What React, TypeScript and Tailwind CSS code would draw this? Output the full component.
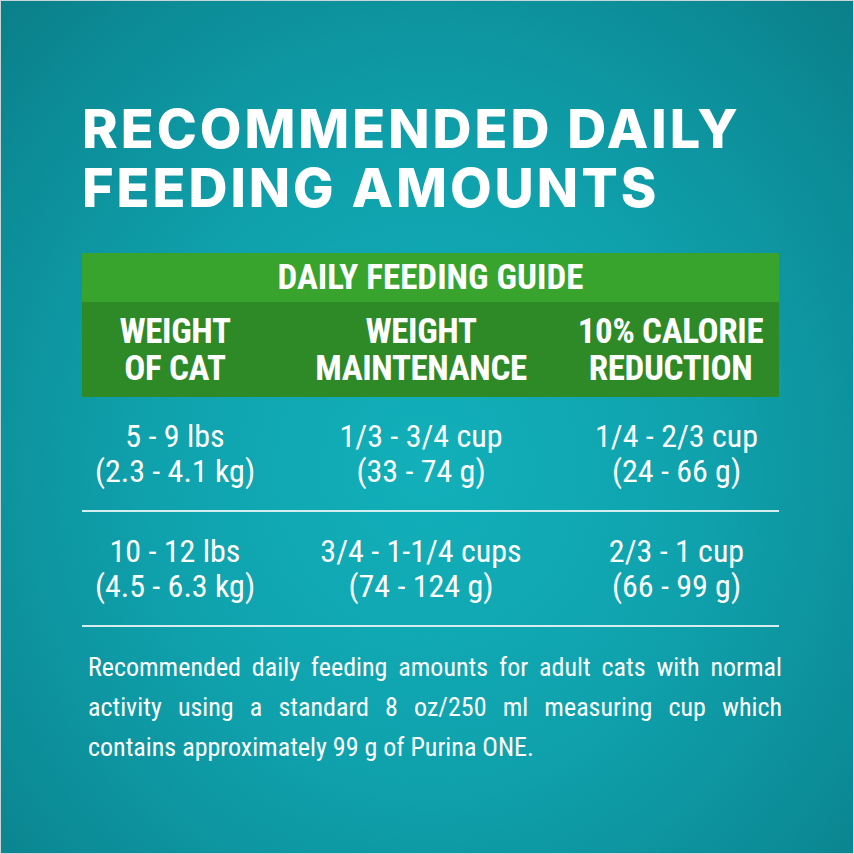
const narrow = 'font-["Roboto",sans-serif] font-stretch-[75%]';

const rows = [
  [
    ['5 - 9 lbs', '(2.3 - 4.1 kg)'],
    ['1/3 - 3/4 cup', '(33 - 74 g)'],
    ['1/4 - 2/3 cup', '(24 - 66 g)'],
  ],
  [
    ['10 - 12 lbs', '(4.5 - 6.3 kg)'],
    ['3/4 - 1-1/4 cups', '(74 - 124 g)'],
    ['2/3 - 1 cup', '(66 - 99 g)'],
  ],
];

export default function App() {
  return (
    <div className="w-[854px] h-[854px] border border-[#c9d6d8] bg-[radial-gradient(ellipse_at_50%_55%,#12b0ba_0%,#0fa2ad_45%,#0c8d98_80%,#0a7f89_100%)] text-white">
      <div className="pl-[81px] pr-[76px] pt-[98px]">
        <h1 className='font-["Inter",sans-serif] font-extrabold text-[54px] leading-[59px] tracking-[0.055em]'>
          RECOMMENDED DAILY
          <br />
          FEEDING AMOUNTS
        </h1>

        <div className={`mt-[36px] w-[697px] ${narrow}`}>
          <div className="h-[49px] bg-[#38a42e] flex items-center justify-center font-bold text-[35px] leading-none">
            DAILY FEEDING GUIDE
          </div>
          <div className="h-[95px] bg-[#2e8a27] grid grid-cols-[186px_306px_1fr] items-center text-center font-bold text-[35px] leading-[37px] tracking-[-0.01em]">
            <div>WEIGHT<br />OF CAT</div>
            <div>WEIGHT<br />MAINTENANCE</div>
            <div className="pr-[12px]">10% CALORIE<br />REDUCTION</div>
          </div>

          {rows.map((row, i) => (
            <div key={i}>
              <div className="h-[113px] grid grid-cols-[186px_306px_1fr] items-center text-center text-[32px] leading-[35px]">
                {row.map((cell, j) => (
                  <div key={j}>
                    {cell[0]}
                    <br />
                    {cell[1]}
                  </div>
                ))}
              </div>
              <div className="h-[2px] bg-[#d4eef0]" />
            </div>
          ))}

          <p className="mt-[20px] ml-[6px] mr-[-3px] text-[26px] leading-[40px] text-justify">
            Recommended daily feeding amounts for adult cats with normal activity using a standard 8 oz/250 ml measuring cup which contains approximately 99 g of Purina ONE.
          </p>
        </div>
      </div>
    </div>
  );
}
